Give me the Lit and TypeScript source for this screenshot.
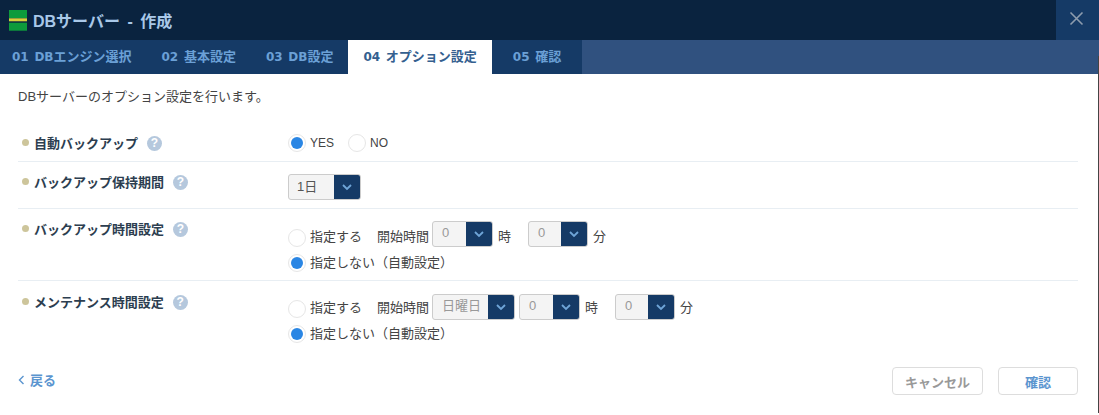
import { LitElement, css, html } from 'lit'
import { customElement } from 'lit/decorators.js'

const chevron = html`<svg width="12" height="8" viewBox="0 0 12 8"><path d="M2 2l4 4 4-4" fill="none" stroke="#6fa5d8" stroke-width="1.8"/></svg>`

@customElement('app-root')
export class AppRoot extends LitElement {
   static styles = css`
      :host {
         display: block;
         position: relative;
         width: 1099px;
         height: 415px;
         overflow: hidden;
         background: #fff;
         font-family: "Liberation Sans", "Noto Sans CJK JP", sans-serif;
         font-size: 13px;
         color: #444;
      }
      /* window edge showing on the right of the dialog */
      :host::after {
         content: "";
         position: absolute;
         right: 0;
         top: 56px;
         bottom: 2px;
         width: 1px;
         background: #444;
      }
      .head {
         height: 40px;
         background: #0a233f;
         display: flex;
         align-items: center;
         padding-left: 9px;
         color: #a9c8e8;
         font-size: 16px;
         font-weight: bold;
         word-spacing: 3px;
      }
      .logo { margin-right: 6px; display: block; }
      .close {
         margin-left: auto;
         width: 43px;
         height: 40px;
         box-sizing: border-box;
         padding: 0 3px 3px 0;
         background: #153a66;
         display: flex;
         align-items: center;
         justify-content: center;
      }
      .tabs {
         height: 34px;
         background: #30517f;
         display: flex;
         font-size: 13px;
         font-weight: bold;
      }
      .tab {
         background: #153a66;
         color: #6ba0d6;
         line-height: 34px;
         white-space: pre;
         padding: 0 15px;
      }
      .tab.first { padding-left: 12px; }
      .tab.on { background: #fff; color: #34608f; }
      .tab.last { padding: 0 21px; }
      .lat {
         font-family: "DejaVu Sans", sans-serif;
         font-size: 12px;
         word-spacing: 1.5px;
      }
      .body { padding: 14px 21px 0 18px; }
      .lead { line-height: 18px; margin-bottom: 14px; }
      .row {
         display: grid;
         grid-template-columns: 270px 1fr;
         align-items: start;
         box-sizing: border-box;
         border-bottom: 1px solid #e8eef3;
      }
      .row.end { border-bottom: none; }
      .label {
         display: flex;
         align-items: center;
         height: 20px;
         padding-left: 4px;
         font-weight: bold;
         color: #2c3e50;
      }
      .dot {
         width: 7px;
         height: 7px;
         border-radius: 50%;
         background: #cdc59b;
         margin-right: 5px;
      }
      .help {
         width: 15px;
         height: 15px;
         border-radius: 50%;
         background: #b5c8dd;
         color: #fff;
         font-size: 12px;
         font-weight: bold;
         display: flex;
         align-items: center;
         justify-content: center;
         margin: 2px 0 0 9px;
      }
      .line { display: flex; align-items: flex-end; line-height: 20px; }
      .line.plain { align-items: center; padding-top: 1px; }
      .line.second { align-items: center; margin-top: 6px; }
      .radio {
         width: 18px;
         height: 18px;
         box-sizing: border-box;
         border-radius: 50%;
         border: 1px solid #e6e6e6;
         background: #fff;
         display: flex;
         align-items: center;
         justify-content: center;
         margin-right: 4px;
      }
      .radio.on::after {
         content: "";
         width: 12px;
         height: 12px;
         border-radius: 50%;
         background: #2a86e4;
      }
      .ans { font-size: 12px; }
      .select {
         display: flex;
         height: 26px;
         box-sizing: border-box;
         border: 1px solid #ccc;
         border-radius: 3px;
         overflow: hidden;
         background: #f4f4f4;
         color: #555;
      }
      .value { flex: 1; padding-left: 9px; line-height: 22px; color: #999; }
      .select.strong .value { padding-left: 8px; color: #555; line-height: 24px; }
      .btn {
         width: 26px;
         background: #153a66;
         display: flex;
         align-items: center;
         justify-content: center;
      }
      .foot {
         display: flex;
         align-items: center;
         padding: 0 21px 0 18px;
         margin-top: 23px;
      }
      .back { color: #5b95cf; font-weight: bold; display: flex; align-items: center; gap: 5px; padding-bottom: 3px; }
      .action {
         height: 28px;
         box-sizing: border-box;
         border: 1px solid #ddd;
         border-radius: 4px;
         display: flex;
         align-items: center;
         justify-content: center;
         font-weight: bold;
         background: #fff;
      }
      .cancel { width: 91px; color: #999; margin-left: auto; }
      .ok { width: 80px; color: #5b95cf; margin-left: 15px; }
      .r1 { height: 42px; padding-top: 12px; }
      .r2 { height: 47px; padding-top: 9px; }
      .r2 .line { padding-top: 3px; }
      .r3 { height: 72px; padding-top: 9px; }
      .r3 .line.first { padding-top: 3px; }
      .r4 { height: 63px; padding-top: 10px; }
      .r4 .line.first { padding-top: 3px; }
      .r4 .line.first > span { margin-bottom: 2px; }
      .r4 .line.second { margin-top: 4px; }
      .start { margin-left: 15px; margin-right: 3px; }
      .unit { margin-left: 5px; }
      .next { margin-left: 17px; }
      .wk { margin-right: 4px; }
   `

   select(value: string, width: number, strong = false, cls = '') {
      return html`<div class="select ${strong ? 'strong' : ''} ${cls}" style="width:${width}px">
         <div class="value">${value}</div>
         <div class="btn">${chevron}</div>
      </div>`
   }

   help() {
      return html`<div class="help">?</div>`
   }

   render() {
      return html`
         <div class="head">
            <svg class="logo" width="18" height="21" viewBox="0 0 18 21">
               <rect width="18" height="8" fill="#0d9b3c"/>
               <rect width="18" height="3" y="8.3" fill="#d6d23a"/>
               <rect width="18" height="8" y="12.7" fill="#0d9b3c"/>
            </svg>
            DBサーバー - 作成
            <div class="close">
               <svg width="15" height="15" viewBox="0 0 15 15"><path d="M1.5 1.5l12 12M13.5 1.5l-12 12" stroke="#8d9cae" stroke-width="1.6"/></svg>
            </div>
         </div>
         <div class="tabs">
            <div class="tab first"><span class="lat">01 DB</span>エンジン選択</div>
            <div class="tab"><span class="lat">02 </span>基本設定</div>
            <div class="tab"><span class="lat">03 DB</span>設定</div>
            <div class="tab on"><span class="lat">04 </span>オプション設定</div>
            <div class="tab last"><span class="lat">05 </span>確認</div>
         </div>
         <div class="body">
            <div class="lead">DBサーバーのオプション設定を行います。</div>
            <div class="row r1">
               <div class="label"><span class="dot"></span>自動バックアップ${this.help()}</div>
               <div class="line plain">
                  <span class="radio on"></span><span class="ans">YES</span>
                  <span class="radio" style="margin-left:14px"></span><span class="ans">NO</span>
               </div>
            </div>
            <div class="row r2">
               <div class="label"><span class="dot"></span>バックアップ保持期間${this.help()}</div>
               <div class="line">${this.select('1日', 73, true)}</div>
            </div>
            <div class="row r3">
               <div class="label"><span class="dot"></span>バックアップ時間設定${this.help()}</div>
               <div>
                  <div class="line first">
                     <span class="radio"></span><span>指定する</span>
                     <span class="start">開始時間</span>
                     ${this.select('0', 61)}<span class="unit">時</span>
                     ${this.select('0', 60, false, 'next')}<span class="unit">分</span>
                  </div>
                  <div class="line second"><span class="radio on"></span>指定しない（自動設定）</div>
               </div>
            </div>
            <div class="row r4 end">
               <div class="label"><span class="dot"></span>メンテナンス時間設定${this.help()}</div>
               <div>
                  <div class="line first">
                     <span class="radio"></span><span>指定する</span>
                     <span class="start">開始時間</span>
                     ${this.select('日曜日', 83, false, 'wk')}
                     ${this.select('0', 61)}<span class="unit">時</span>
                     ${this.select('0', 60, false, 'next')}<span class="unit">分</span>
                  </div>
                  <div class="line second"><span class="radio on"></span>指定しない（自動設定）</div>
               </div>
            </div>
         </div>
         <div class="foot">
            <div class="back">
               <svg width="7" height="10" viewBox="0 0 7 10"><path d="M5.5 1L1.5 5l4 4" fill="none" stroke="#5b95cf" stroke-width="1.4"/></svg>
               戻る
            </div>
            <div class="action cancel">キャンセル</div>
            <div class="action ok">確認</div>
         </div>
      `
   }
}
